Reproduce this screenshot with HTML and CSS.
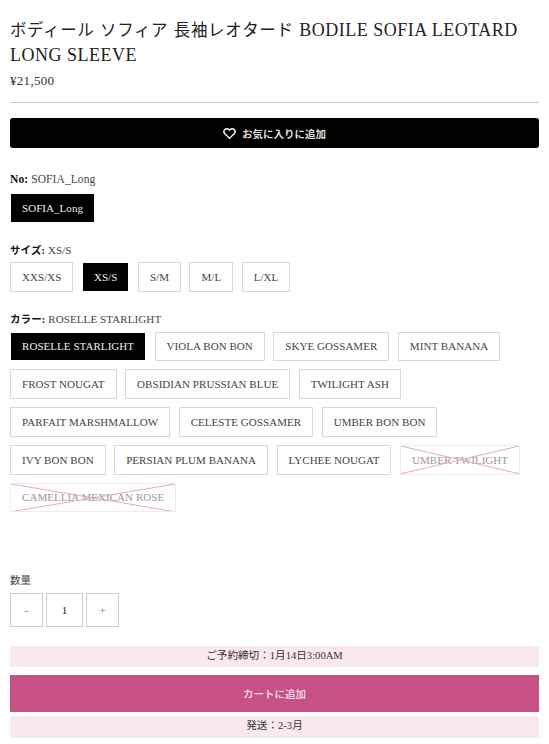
FILE: index.html
```html
<!DOCTYPE html>
<html lang="ja">
<head>
<meta charset="utf-8">
<title>BODILE SOFIA LEOTARD LONG SLEEVE</title>
<link rel="stylesheet" href="styles.css">
</head>
<body>
<main class="product">
  <h1 class="title"><span class="kana">ボディール ソフィア 長袖レオタード</span> <span class="latin">BODILE SOFIA LEOTARD</span> <span class="latin">LONG SLEEVE</span></h1>
  <p class="price">¥21,500</p>
  <hr class="rule">
  <button class="wish">
    <svg class="heart" viewBox="0 0 24 24" width="13" height="13" aria-hidden="true"><path d="M12 21 3.4 12.4a5.4 5.4 0 0 1 0-7.6 5.3 5.3 0 0 1 7.6 0l1 1 1-1a5.3 5.3 0 0 1 7.6 0 5.4 5.4 0 0 1 0 7.6Z" fill="none" stroke="#fff" stroke-width="2.6" stroke-linejoin="round"/></svg>
    <span>お気に入りに追加</span>
  </button>

  <section class="option opt-no">
    <p class="label"><b>No:</b> SOFIA_Long</p>
    <div class="swatches"><span class="sw on">SOFIA_Long</span></div>
  </section>

  <section class="option opt-size">
    <p class="label"><b>サイズ:</b> XS/S</p>
    <div class="swatches">
      <span class="sw">XXS/XS</span><span class="sw on">XS/S</span><span class="sw">S/M</span><span class="sw">M/L</span><span class="sw">L/XL</span>
    </div>
  </section>

  <section class="option opt-color">
    <p class="label"><b>カラー:</b> ROSELLE STARLIGHT</p>
    <div class="swatches">
      <span class="sw on">ROSELLE STARLIGHT</span>
      <span class="sw">VIOLA BON BON</span>
      <span class="sw">SKYE GOSSAMER</span>
      <span class="sw">MINT BANANA</span>
      <span class="sw">FROST NOUGAT</span>
      <span class="sw">OBSIDIAN PRUSSIAN BLUE</span>
      <span class="sw">TWILIGHT ASH</span>
      <span class="sw">PARFAIT MARSHMALLOW</span>
      <span class="sw">CELESTE GOSSAMER</span>
      <span class="sw">UMBER BON BON</span>
      <span class="sw">IVY BON BON</span>
      <span class="sw">PERSIAN PLUM BANANA</span>
      <span class="sw">LYCHEE NOUGAT</span>
      <span class="sw off">UMBER TWILIGHT<svg class="cross" viewBox="0 0 100 100" preserveAspectRatio="none" aria-hidden="true"><path d="M0 0 100 100M0 100 100 0" vector-effect="non-scaling-stroke"/></svg></span>
      <span class="sw off">CAMELLIA MEXICAN ROSE<svg class="cross" viewBox="0 0 100 100" preserveAspectRatio="none" aria-hidden="true"><path d="M0 0 100 100M0 100 100 0" vector-effect="non-scaling-stroke"/></svg></span>
    </div>
  </section>

  <section class="qty">
    <p class="qty-label">数量</p>
    <div class="stepper">
      <span class="step">-</span><span class="count">1</span><span class="step">+</span>
    </div>
  </section>

  <p class="note">ご予約締切：1月14日3:00AM</p>
  <button class="cart">カートに追加</button>
  <p class="note note-ship">発送：2-3月</p>
</main>
</body>
</html>
```
FILE: styles.css
```css
* { box-sizing: border-box; }
html, body { margin: 0; background: #fff; }
body {
  font-family: "Liberation Serif", "Noto Sans CJK JP", serif;
  color: #222;
  font-size: 12px;
}
p { margin: 0; }
.product { padding: 18px 10px 0; }
.title {
  margin: 0;
  font-weight: 400;
  font-size: 16.5px;
  line-height: 24px;
  letter-spacing: 0.6px;
  word-spacing: 1px;
  color: #222;
}
.latin { font-size: 18px; letter-spacing: 0.5px; word-spacing: 0; }
.price { margin-top: 4px; font-size: 13px; letter-spacing: 0.3px; line-height: 18px; color: #333; }
.rule { margin: 12px 0 15px; border: 0; border-top: 1px solid #ccc; }
.wish {
  display: flex;
  align-items: center;
  justify-content: center;
  gap: 6px;
  width: 100%;
  height: 30px;
  border: 0;
  border-radius: 3px;
  background: #000;
  color: #ddd;
  font: 700 10.5px "Liberation Serif", "Noto Sans CJK JP", serif;
}
.heart { display: block; }
.option { margin-top: 19px; }
.opt-no { margin-top: 23px; }
.label { font-size: 11px; letter-spacing: 0.1px; line-height: 16px; color: #444; margin-bottom: 3px; }
.opt-no .label { font-size: 11.5px; margin-bottom: 6px; }
.opt-color .label { margin-bottom: 4px; }
.label b { font-size: 10.5px; color: #111; }
.opt-no .label b { font-size: 11.5px; }
.swatches { display: flex; flex-wrap: wrap; gap: 8px 8.5px; }
.sw {
  position: relative;
  display: flex;
  align-items: center;
  height: 29.75px;
  padding: 0 11px;
  border: 1px solid #d8d8d8;
  font-size: 11px;
  letter-spacing: 0.05px;
  color: #444;
  white-space: nowrap;
}
.sw.on { background: #000; border-color: #fff; color: #eee; }
.sw.off { color: #999; border-color: #eee; }
.cross {
  position: absolute;
  inset: 0;
  width: 100%;
  height: 100%;
  fill: none;
  stroke: #e3aeae;
  stroke-width: 1;
}
.qty { margin-top: 61px; }
.qty-label { font-size: 10.5px; line-height: 16px; color: #444; margin-bottom: 4px; }
.stepper { display: flex; gap: 3px; }
.step, .count {
  display: flex;
  align-items: center;
  justify-content: center;
  height: 34px;
  border: 1px solid #ccc;
  font-size: 11px;
}
.step { width: 33px; color: #777; }
.count { width: 37px; color: #111; }
.note {
  margin-top: 19px;
  height: 21px;
  background: #fae9ec;
  text-align: center;
  font-size: 10.6px;
  line-height: 20px;
  color: #333;
}
.note-ship { margin-top: 4px; height: 22px; }
.cart {
  display: block;
  width: 100%;
  height: 37px;
  margin-top: 8px;
  border: 0;
  background: #c65285;
  color: #fbe4ee;
  font: 500 10.5px "Liberation Serif", "Noto Sans CJK JP", serif;
}
```
